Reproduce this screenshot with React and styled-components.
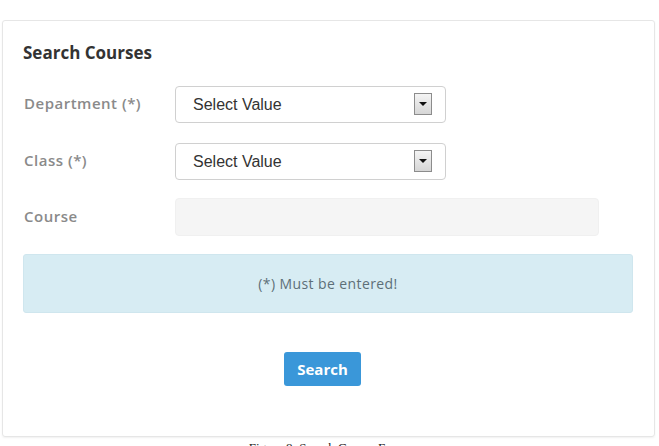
import React from 'react';
import styled, {createGlobalStyle} from 'styled-components'

const GlobalStyle = createGlobalStyle`
  body {
    margin: 0;
    background: #fff;
    font-family: "Open Sans", sans-serif;
  }
`

const Page = styled.div`
  width: 659px;
  height: 446px;
  overflow: hidden;
`

const Card = styled.div`
  margin: 20px 4px 0 2px;
  height: 417px;
  box-sizing: border-box;
  border: 1px solid #e6e6e6;
  border-radius: 3px;
  box-shadow: 0 1px 2px rgba(0, 0, 0, 0.06);
  padding: 20px 20px 0 20px;
`

const Title = styled.h3`
  margin: 0 0 21px 0;
  font-size: 17px;
  font-weight: 700;
  color: #333;
  line-height: 24px;
`

const Row = styled.div`
  display: grid;
  grid-template-columns: 152px auto;
  align-items: center;
  margin-bottom: ${p => p.gap || 20}px;
`

const Label = styled.label`
  padding: 0 0 3px 1px;
  font-size: 15px;
  font-weight: 600;
  letter-spacing: 0.5px;
  color: #8a8a8a;
`

const SelectBox = styled.div`
  position: relative;
  width: 271px;
  height: 37px;
  box-sizing: border-box;
  border: 1px solid #d0d0d0;
  border-radius: 4px;
  background: #fff;
  display: flex;
  align-items: center;
  padding-left: 17px;
  font-family: "Liberation Sans", Arial, sans-serif;
  font-size: 16px;
  color: #333;
`

const Arrow = styled.span`
  position: absolute;
  right: 13px;
  top: 6px;
  width: 18px;
  height: 22px;
  box-sizing: border-box;
  border: 1px solid #8c8c8c;
  background: linear-gradient(#f4f4f4, #d6d6d6);
  display: flex;
  align-items: center;
  justify-content: center;

  &::after {
    content: '';
    border-left: 4px solid transparent;
    border-right: 4px solid transparent;
    border-top: 4px solid #111;
  }
`

const TextInput = styled.div`
  width: 424px;
  height: 38px;
  box-sizing: border-box;
  border: 1px solid #f0f0f0;
  border-radius: 4px;
  background: #f5f5f5;
`

const Alert = styled.div`
  height: 59px;
  box-sizing: border-box;
  margin-right: 1px;
  border: 1px solid #cfe6ee;
  border-radius: 3px;
  background: #d7ecf3;
  display: flex;
  align-items: center;
  justify-content: center;
  font-size: 14px;
  letter-spacing: 0.4px;
  color: #5d6f78;
`

const Actions = styled.div`
  display: flex;
  justify-content: center;
  margin-top: 39px;
  padding-right: 12px;
`

const Button = styled.button`
  width: 77px;
  height: 34px;
  border: none;
  border-radius: 3px;
  background: #3a97d9;
  color: #fff;
  font-family: "Open Sans", sans-serif;
  font-size: 15px;
  font-weight: 700;
  cursor: pointer;
`

const Caption = styled.div`
  text-align: center;
  margin-top: 3px;
  padding-right: 4px;
  font-family: "Liberation Serif", "Times New Roman", serif;
  font-size: 13px;
  line-height: 15px;
  color: #222;
`

function App() {
  return (
    <Page>
      <GlobalStyle/>
      <Card>
        <Title>Search Courses</Title>
        <Row>
          <Label>Department (*)</Label>
          <SelectBox>Select Value<Arrow/></SelectBox>
        </Row>
        <Row gap={18}>
          <Label>Class (*)</Label>
          <SelectBox>Select Value<Arrow/></SelectBox>
        </Row>
        <Row gap={18}>
          <Label>Course</Label>
          <TextInput/>
        </Row>
        <Alert>(*) Must be entered!</Alert>
        <Actions>
          <Button>Search</Button>
        </Actions>
      </Card>
      <Caption>Figure 8: Search Course Form</Caption>
    </Page>
  );
}

export default App;
